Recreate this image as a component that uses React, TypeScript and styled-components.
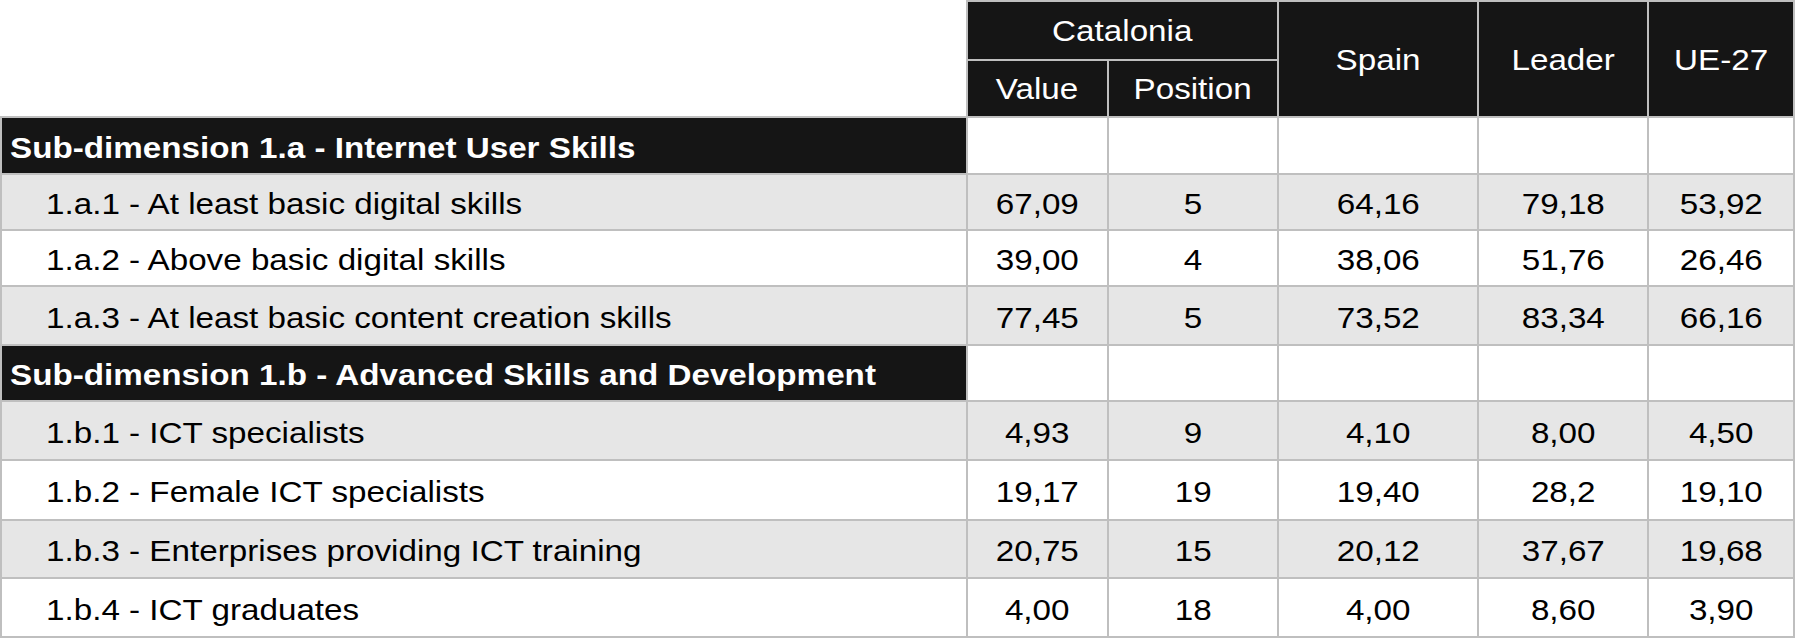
import React from "react";
import styled, { createGlobalStyle } from "styled-components";

const GlobalStyle = createGlobalStyle`
  html, body {
    margin: 0;
    padding: 0;
    background: #fff;
  }
  body {
    font-family: "Liberation Sans", Arial, sans-serif;
  }
`;

const LINE = "#bfbfbf";
const DARK = "#151515";

const Table = styled.table`
  width: 1795px;
  border-collapse: collapse;
  table-layout: fixed;
  font-family: "Liberation Sans", Arial, sans-serif;
  font-size: 29px;
  color: #000;
`;

// the source renders its text a bit wide, so stretch each label horizontally
const Txt = styled.span<{ $from?: "left" | "center" }>`
  display: inline-block;
  white-space: nowrap;
  transform: scaleX(1.145);
  transform-origin: ${(p) => (p.$from === "left" ? "left" : "center")} center;
`;

const Corner = styled.th`
  border: none;
  border-bottom: 2px solid ${LINE};
  background: #fff;
  padding: 0;
`;

const HeadRow = styled.tr<{ $h: number }>`
  height: ${(p) => p.$h}px;
`;

const HeadCell = styled.th`
  background: ${DARK};
  color: #fff;
  font-weight: normal;
  text-align: center;
  border: 2px solid ${LINE};
  padding: 2px 0 0;
`;

const Row = styled.tr<{ $h: number; $shade?: boolean }>`
  height: ${(p) => p.$h}px;
  background: ${(p) => (p.$shade ? "#e6e6e6" : "#fff")};
`;

const GroupLabel = styled.td`
  background: ${DARK};
  color: #fff;
  font-weight: bold;
  border: 2px solid ${LINE};
  padding: 5px 0 0 8px;
  white-space: nowrap;
`;

const ItemLabel = styled.td`
  border: 2px solid ${LINE};
  padding: 5px 0 0 44px;
  white-space: nowrap;
`;

const Num = styled.td`
  border: 2px solid ${LINE};
  text-align: center;
  padding: 5px 0 0;
`;

type Item = { label: string; values: string[]; h: number };
type Group = { title: string; h: number; items: Item[] };

const groups: Group[] = [
  {
    title: "Sub-dimension 1.a - Internet User Skills",
    h: 57,
    items: [
      { label: "1.a.1 - At least basic digital skills", values: ["67,09", "5", "64,16", "79,18", "53,92"], h: 56 },
      { label: "1.a.2 - Above basic digital skills", values: ["39,00", "4", "38,06", "51,76", "26,46"], h: 56 },
      { label: "1.a.3 - At least basic content creation skills", values: ["77,45", "5", "73,52", "83,34", "66,16"], h: 59 },
    ],
  },
  {
    title: "Sub-dimension 1.b - Advanced Skills and Development",
    h: 56,
    items: [
      { label: "1.b.1 - ICT specialists", values: ["4,93", "9", "4,10", "8,00", "4,50"], h: 59 },
      { label: "1.b.2 - Female ICT specialists", values: ["19,17", "19", "19,40", "28,2", "19,10"], h: 60 },
      { label: "1.b.3 - Enterprises providing ICT training", values: ["20,75", "15", "20,12", "37,67", "19,68"], h: 58 },
      { label: "1.b.4 - ICT graduates", values: ["4,00", "18", "4,00", "8,60", "3,90"], h: 59 },
    ],
  },
];

const widths = [966, 141, 170, 200, 170, 146];

export default function App() {
  return (
    <>
      <GlobalStyle />
      <Table>
        <colgroup>
          {widths.map((w, i) => (
            <col key={i} width={w} />
          ))}
        </colgroup>
        <thead>
          <HeadRow $h={59}>
            <Corner rowSpan={2} />
            <HeadCell colSpan={2}>
              <Txt>Catalonia</Txt>
            </HeadCell>
            <HeadCell rowSpan={2}>
              <Txt>Spain</Txt>
            </HeadCell>
            <HeadCell rowSpan={2}>
              <Txt>Leader</Txt>
            </HeadCell>
            <HeadCell rowSpan={2}>
              <Txt>UE-27</Txt>
            </HeadCell>
          </HeadRow>
          <HeadRow $h={57}>
            <HeadCell>
              <Txt>Value</Txt>
            </HeadCell>
            <HeadCell>
              <Txt>Position</Txt>
            </HeadCell>
          </HeadRow>
        </thead>
        <tbody>
          {groups.map((g) => (
            <React.Fragment key={g.title}>
              <Row $h={g.h}>
                <GroupLabel>
                  <Txt $from="left">{g.title}</Txt>
                </GroupLabel>
                <Num />
                <Num />
                <Num />
                <Num />
                <Num />
              </Row>
              {g.items.map((it, idx) => (
                <Row key={it.label} $h={it.h} $shade={idx % 2 === 0}>
                  <ItemLabel>
                    <Txt $from="left">{it.label}</Txt>
                  </ItemLabel>
                  {it.values.map((v, j) => (
                    <Num key={j}>
                      <Txt>{v}</Txt>
                    </Num>
                  ))}
                </Row>
              ))}
            </React.Fragment>
          ))}
        </tbody>
      </Table>
    </>
  );
}
